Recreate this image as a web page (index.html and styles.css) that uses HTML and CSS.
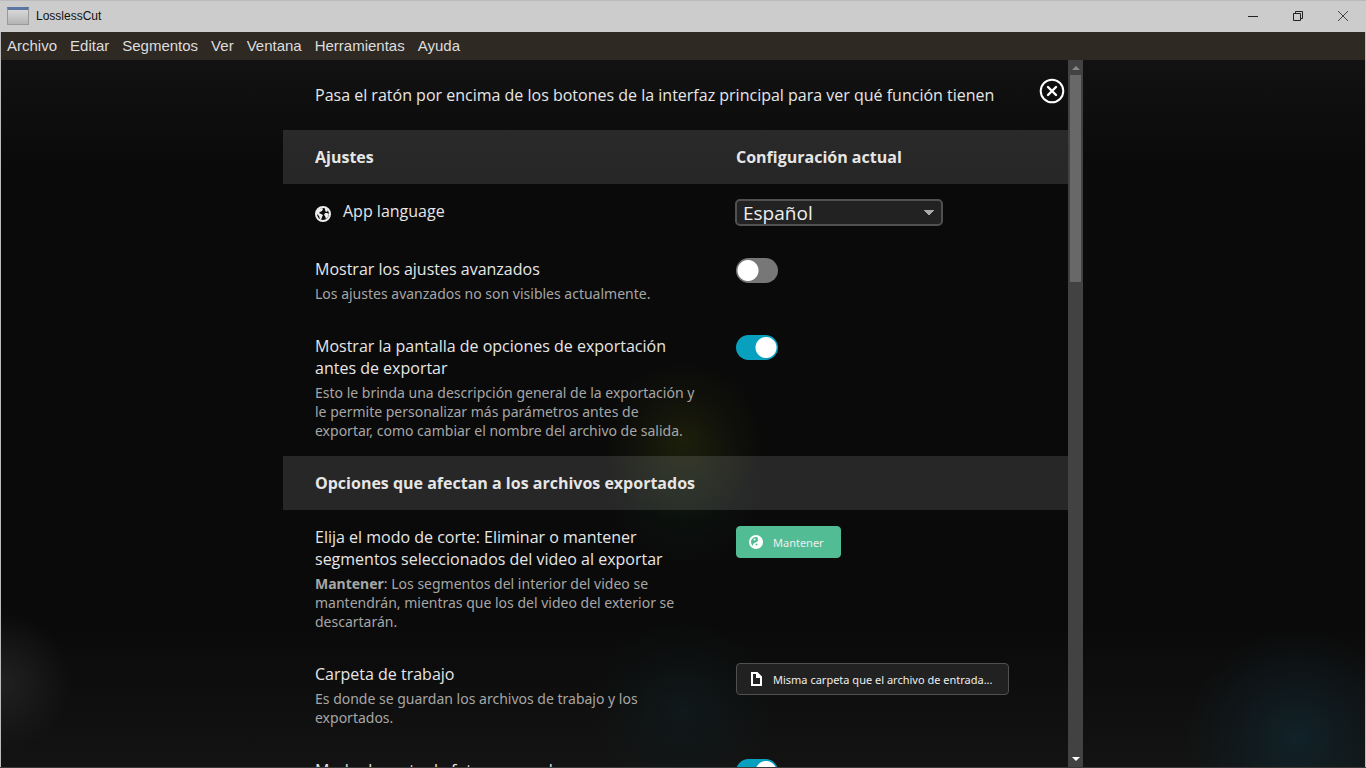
FILE: index.html
```
<!DOCTYPE html>
<html lang="es">
<head>
  <meta charset="UTF-8" />
  <meta name="viewport" content="width=device-width, initial-scale=1.0"/>
  <title>LosslessCut</title>
  <link rel="stylesheet" href="styles.css">
</head>
<body>
  <div class="window">
    <header class="titlebar">
      <span class="app-icon"></span>
      <span class="app-name">LosslessCut</span>
      <div class="window-buttons">
        <button type="button" aria-label="Minimizar">
          <svg width="12" height="12" viewBox="0 0 12 12"><path d="M1 6.500h10" stroke="#222" fill="none"/></svg>
        </button>
        <button type="button" aria-label="Restaurar">
          <svg width="12" height="12" viewBox="0 0 12 12"><path d="M1.500 3.500h7v7h-7zM3.500 3.500v-2h7v7h-2" stroke="#222" fill="none"/></svg>
        </button>
        <button type="button" aria-label="Cerrar ventana">
          <svg width="12" height="12" viewBox="0 0 12 12"><path d="M1 1l10 10M11 1L1 11" stroke="#444" fill="none"/></svg>
        </button>
      </div>
    </header>

    <nav class="menubar">
      <a href="#">Archivo</a>
      <a href="#">Editar</a>
      <a href="#">Segmentos</a>
      <a href="#">Ver</a>
      <a href="#">Ventana</a>
      <a href="#">Herramientas</a>
      <a href="#">Ayuda</a>
    </nav>

    <main class="stage">
      <div class="sheet">
        <div class="sheet-content">
          <div class="hint">
            <p>Pasa el ratón por encima de los botones de la interfaz principal para ver qué función tienen</p>
            <button type="button" class="close" aria-label="Cerrar">
              <svg width="26" height="26" viewBox="0 0 26 26" fill="none" stroke="#fff" stroke-width="2"><circle cx="13" cy="13" r="11.300"/><path d="M9 9l8 8M17 9l-8 8" stroke-width="2.400" stroke-linecap="round"/></svg>
            </button>
          </div>

          <table class="settings">
            <thead>
              <tr class="section">
                <th>Ajustes</th>
                <th>Configuración actual</th>
              </tr>
            </thead>
            <tbody>
              <tr>
                <td>
                  <label class="title language" for="language">
                    <svg width="16" height="16" viewBox="0 0 16 16"><circle cx="8" cy="8" r="7" fill="#0c0c0c" stroke="#eee" stroke-width="2"/><path d="M2 5l2-2 3-1 1 1-1 2-2 1-1 1 2 1 2 1-1 2-1 3-1-1-1-3-2-2zM10 2l2 1 1 2-2 1-1-2zM10 7l2 0 2 1-1 3-2 2-1-3-1-1z" fill="#eee"/></svg>
                    App language
                  </label>
                </td>
                <td class="select-cell">
                  <select id="language">
                    <option>Español</option>
                    <option>English</option>
                  </select>
                </td>
              </tr>
              <tr>
                <td>
                  <label class="title" for="advanced">Mostrar los ajustes avanzados</label>
                  <div class="detail">Los ajustes avanzados no son visibles actualmente.</div>
                </td>
                <td><input type="checkbox" class="switch" id="advanced" /></td>
              </tr>
              <tr>
                <td>
                  <label class="title" for="exportScreen">Mostrar la pantalla de opciones de exportación antes de exportar</label>
                  <div class="detail">Esto le brinda una descripción general de la exportación y le permite personalizar más parámetros antes de exportar, como cambiar el nombre del archivo de salida.</div>
                </td>
                <td><input type="checkbox" class="switch" id="exportScreen" checked /></td>
              </tr>
              <tr class="section">
                <th colspan="2">Opciones que afectan a los archivos exportados</th>
              </tr>
              <tr>
                <td>
                  <label class="title" for="cutMode">Elija el modo de corte: Eliminar o mantener segmentos seleccionados del video al exportar</label>
                  <div class="detail"><b>Mantener</b>: Los segmentos del interior del video se mantendrán, mientras que los del video del exterior se descartarán.</div>
                </td>
                <td>
                  <button type="button" class="btn btn-green" id="cutMode">
                    <svg width="14" height="14" viewBox="0 0 14 14"><circle cx="7" cy="7" r="6" fill="none" stroke="#fff" stroke-width="2"/><path d="M8 1a6 6 0 0 1-1 12c-2 0-3-1-3-3 0-3 5-2 5-5 0-2-1-3-1-4z" fill="#fff"/><circle cx="5.500" cy="4.500" r="1" fill="#fff"/><circle cx="7.500" cy="9.500" r="1" fill="#52bd95"/></svg>
                    Mantener
                  </button>
                </td>
              </tr>
              <tr>
                <td>
                  <label class="title" for="workDir">Carpeta de trabajo</label>
                  <div class="detail">Es donde se guardan los archivos de trabajo y los exportados.</div>
                </td>
                <td>
                  <button type="button" class="btn" id="workDir">
                    <svg width="14" height="14" viewBox="0 0 14 14"><path d="M3 1h5l4 4v8H3z" fill="none" stroke="#fff" stroke-width="2"/><path d="M7 0l6 6H7z" fill="#fff"/></svg>
                    Misma carpeta que el archivo de entrada...
                  </button>
                </td>
              </tr>
              <tr>
                <td>
                  <label class="title" for="keyframeCut">Modo de corte de fotogramas clave</label>
                </td>
                <td><input type="checkbox" class="switch" id="keyframeCut" checked /></td>
              </tr>
            </tbody>
          </table>
        </div>

        <div class="scrollbar">
          <span class="arrow-up"></span>
          <span class="thumb"></span>
          <span class="arrow-down"></span>
        </div>
      </div>
    </main>
  </div>
</body>
</html>
```
FILE: styles.css
```
* {
  box-sizing: border-box;
}

body {
  margin: 0;
  background: #0a0a0a;
  color: #e6e6e6;
  font-family: "Open Sans", "Noto Sans", sans-serif;
  font-size: 16px;
  line-height: 22px;
}

button {
  border: none;
  background: none;
  padding: 0;
  color: inherit;
  font-family: inherit;
}

.window {
  height: 100vh;
  display: flex;
  flex-direction: column;
  overflow: hidden;
  border-bottom: 1px solid #3a3a3a;
}

/* title bar */
.titlebar {
  flex: none;
  height: 32px;
  display: flex;
  align-items: center;
  gap: 7px;
  padding: 0 1px 2px 7px;
  background: #ccc;
  border-top: 1px solid #bbb;
  color: #111;
  font-family: "Liberation Sans", Arial, sans-serif;
  font-size: 12px;
}

.app-icon {
  width: 22px;
  height: 18px;
  background: linear-gradient(#d8d8d8, #b4b4b4);
  border: 1px solid #999;
  border-top: 3px solid #5b75a3;
}

.window-buttons {
  margin-left: auto;
  display: flex;
}

.window-buttons button {
  width: 45px;
  height: 28px;
  display: flex;
  align-items: center;
  justify-content: center;
}

/* menu */
.menubar {
  flex: none;
  height: 28px;
  display: flex;
  align-items: center;
  gap: 13px;
  padding: 0 6px;
  background: #2f2924;
  border: solid #bbb;
  border-width: 0 1px;
  font-family: "Liberation Sans", Arial, sans-serif;
  font-size: 15px;
}

.menubar a {
  color: #ddd;
  text-decoration: none;
}

/* dark backdrop with faint blurred colours */
.stage {
  flex: 1;
  min-height: 0;
  display: flex;
  justify-content: center;
  border: solid #bbb;
  border-width: 0 1px;
  background:
    radial-gradient(circle at 50% 54%, rgba(36, 38, 10, 0.7), rgba(36, 38, 10, 0.3) 40px, transparent 80px),
    radial-gradient(circle at 50% 61%, rgba(14, 30, 20, 0.5), transparent 75px),
    radial-gradient(circle at 50% 92%, rgba(16, 34, 38, 0.5), rgba(16, 34, 38, 0.2) 45px, transparent 90px),
    radial-gradient(circle at 95% 96%, rgba(16, 38, 46, 0.8), rgba(16, 38, 46, 0.4) 50px, transparent 110px),
    radial-gradient(circle at 0 88%, rgba(38, 38, 38, 0.8), rgba(38, 38, 38, 0.4) 35px, transparent 70px),
    linear-gradient(#121212, #0a0a0a 15%, #0a0a0a 80%, #131313);
}

.sheet {
  width: 100%;
  max-width: 800px;
  display: flex;
}

.sheet-content {
  flex: 1;
  overflow: hidden;
}

.hint {
  display: flex;
  justify-content: space-between;
  align-items: flex-start;
  padding: 0 3px 0 32px;
  height: 70px;
}

.hint p {
  margin: 24px 0;
}

.close {
  margin-top: 18px;
  height: 26px;
}

.close svg {
  display: block;
}

/* settings table */
.settings {
  width: 100%;
  table-layout: fixed;
  border-collapse: collapse;
}

.settings th,
.settings td {
  padding: 16px 6px 16px 32px;
  text-align: left;
  vertical-align: top;
}

.settings th:first-child,
.settings td:first-child {
  width: 421px;
}

.section {
  background: rgba(255, 255, 255, 0.12);
}

.settings .select-cell {
  padding: 15px 6px 16px 31px;
}

.title {
  display: block;
}

.language {
  display: flex;
  align-items: flex-end;
  gap: 12px;
}

.detail {
  margin-top: 4px;
  font-family: "Noto Sans", "Open Sans", sans-serif;
  font-size: 14px;
  line-height: 19px;
  color: #a6a6a6;
}

select {
  display: block;
  appearance: none;
  width: 208px;
  height: 27px;
  padding: 0 6px;
  border: 2px solid #505050;
  border-radius: 5px;
  background: #222 conic-gradient(from -45deg at 50% 100%, #aaa 90deg, transparent 0) no-repeat right 7px center / 10px 5px;
  color: #eee;
  font-family: inherit;
  font-size: 19px;
  line-height: 22px;
}

.switch {
  display: block;
  appearance: none;
  margin: 0;
  width: 42px;
  height: 25px;
  border-radius: 13px;
  background: radial-gradient(circle at 12px 50%, #fff 10px, #777 11px);
}

.switch:checked {
  background: radial-gradient(circle at 30px 50%, #fff 10px, #08a0bf 11px);
}

.btn {
  display: flex;
  align-items: center;
  gap: 10px;
  height: 32px;
  padding: 0 16px 0 12px;
  background: #212121;
  border: 1px solid #505050;
  border-radius: 4px;
  color: #eee;
  font-family: "Noto Sans", "Open Sans", sans-serif;
  font-size: 11px;
}

.btn-green {
  background: #52bd95;
  border-color: #52bd95;
}

/* scrollbar */
.scrollbar {
  flex: none;
  width: 15px;
  display: flex;
  flex-direction: column;
  align-items: center;
  background: #424242;
}

.arrow-up,
.arrow-down {
  border: 4px solid transparent;
}

.arrow-up {
  margin: 2px 0 5px;
  border-bottom-color: #888;
}

.thumb {
  width: 11px;
  height: 207px;
  background: #686868;
}

.arrow-down {
  margin: auto 0 2px;
  border-top-color: #fff;
}
```
